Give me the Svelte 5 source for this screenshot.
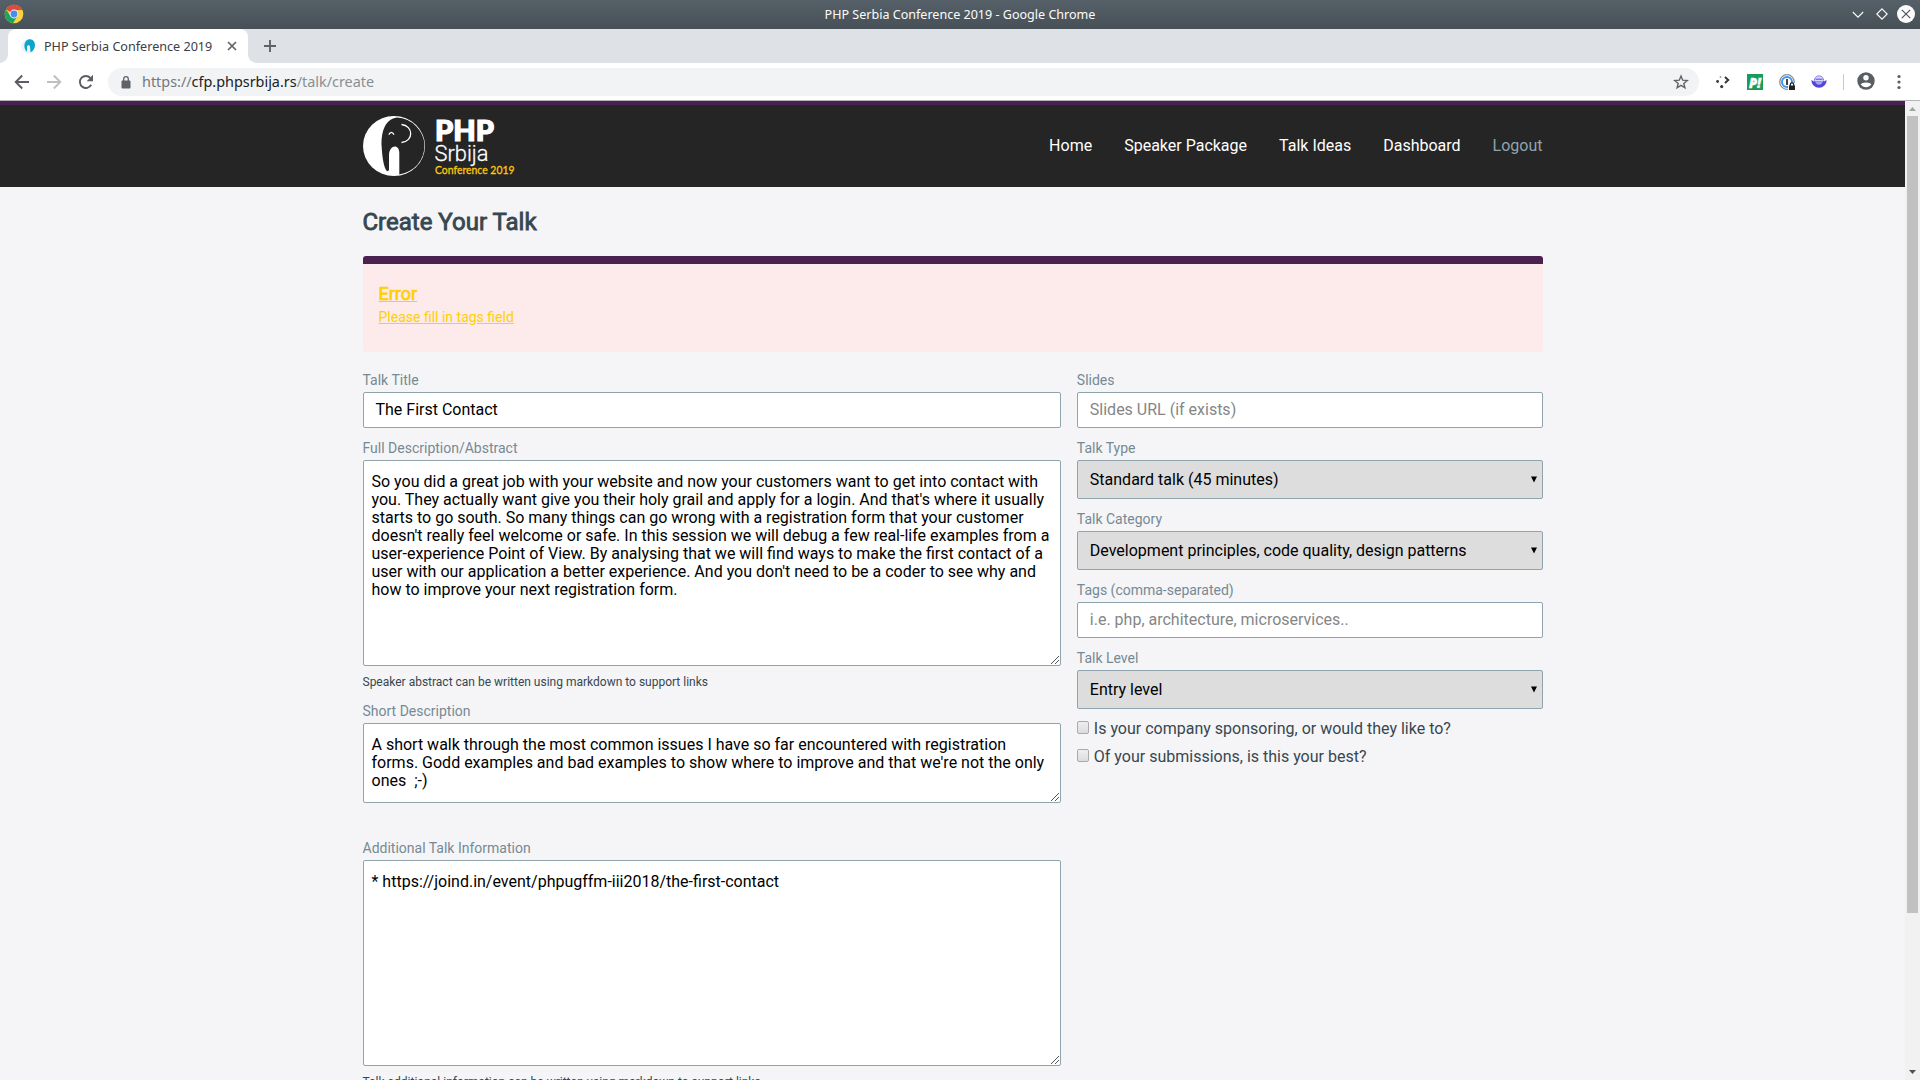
<script>
  const nav = ['Home', 'Speaker Package', 'Talk Ideas', 'Dashboard'];

  const abstractText = [
    'So you did a great job with your website and now your customers want to get into contact with',
    "you. They actually want give you their holy grail and apply for a login. And that's where it usually",
    'starts to go south. So many things can go wrong with a registration form that your customer',
    "doesn't really feel welcome or safe. In this session we will debug a few real-life examples from a",
    'user-experience Point of View. By analysing that we will find ways to make the first contact of a',
    "user with our application a better experience. And you don't need to be a coder to see why and",
    'how to improve your next registration form.'
  ].join('\n');

  const shortText = [
    'A short walk through the most common issues I have so far encountered with registration',
    "forms. Godd examples and bad examples to show where to improve and that we're not the only",
    'ones  ;-)'
  ].join('\n');

  const infoText = '* https://joind.in/event/phpugffm-iii2018/the-first-contact';
</script>

{#snippet area(text, size)}
  <div class="area {size}">
    {text}
    <svg class="grip" width="8" height="8" viewBox="0 0 8 8" shape-rendering="crispEdges">
      <path d="M0 7.5h1M1 6.5h1M2 5.5h1M3 4.5h1M4 3.5h1M5 2.5h1M6 1.5h1M7 .5h1M4 7.5h1M5 6.5h1M6 5.5h1M7 4.5h1" stroke="#555" />
    </svg>
  </div>
{/snippet}

{#snippet dropdown(text)}
  <div class="field select">
    <span>{text}</span>
    <svg width="6" height="7" viewBox="0 0 6 7"><path d="M0 .5h6L3 6.5z" fill="#000" /></svg>
  </div>
{/snippet}

<div class="window">
  <header class="titlebar">
    <svg class="chrome" width="20" height="20" viewBox="0 0 20 20">
      <circle cx="10" cy="10" r="9.3" fill="#fdd23f" />
      <path d="M10 10L1.9 5.4A9.3 9.3 0 0 1 18.4 6H10z" fill="#dd4b3e" />
      <path d="M1.9 5.4A9.3 9.3 0 0 0 9 19.2L13.4 12 10 10 6.5 12z" fill="#1ea361" />
      <circle cx="10" cy="10" r="4.4" fill="#f3f3f3" />
      <circle cx="10" cy="10" r="3.4" fill="#4a8af4" />
    </svg>
    <span class="wtitle">PHP Serbia Conference 2019 - Google Chrome</span>
    <svg class="wbuttons" width="68" height="20" viewBox="0 0 68 20" fill="none" stroke="#fcfcfc" stroke-width="1.1">
      <path d="M4.8 8l5.2 5.2L15.2 8" />
      <path d="M34 4.8L39.2 10 34 15.2 28.8 10z" />
      <circle cx="58" cy="10" r="9" fill="#fcfcfc" stroke="none" />
      <path d="M53.8 5.8l8.4 8.4M62.2 5.8l-8.4 8.4" stroke="#475057" />
    </svg>
  </header>

  <div class="tabs">
    <div class="tab">
      <svg width="16" height="16" viewBox="0 0 16 16">
        <circle cx="7" cy="8.5" r="7" fill="#eef4f6" />
        <path d="M5 3C8-.5 14 1.500 14 7c0 3-1.500 6-4.500 7.500L9 8.500C8.500 6.500 6 7 6 9v4.500C3 12 2.500 6 5 3z" fill="#0ea5cd" />
      </svg>
      <span>PHP Serbia Conference 2019</span>
      <svg class="x" width="10" height="10" viewBox="0 0 10 10"><path d="M1 1l8 8M9 1L1 9" stroke="#5f6368" stroke-width="1.7" /></svg>
    </div>
    <svg class="plus" width="12" height="12" viewBox="0 0 12 12"><path d="M6 0v12M0 6h12" stroke="#5f6368" stroke-width="1.9" /></svg>
  </div>

  <div class="toolbar">
    <svg class="nb" width="16" height="16" viewBox="0 0 16 16" fill="none" stroke="#5a5e63" stroke-width="1.9"><path d="M15 8H2M8.200 1.500L1.700 8l6.500 6.500" /></svg>
    <svg class="nb" width="16" height="16" viewBox="0 0 16 16" fill="none" stroke="#bdbfc2" stroke-width="1.900"><path d="M1 8h13M7.800 1.500L14.300 8l-6.500 6.500" /></svg>
    <svg class="nb" width="16" height="16" viewBox="0 0 16 16"><path d="M13.200 10.800A6 6 0 1 1 12.400 4" fill="none" stroke="#5a5e63" stroke-width="1.900" /><path d="M15 .8v6.400H8.700z" fill="#5a5e63" /></svg>
    <div class="omnibox">
      <svg width="10" height="13" viewBox="0 0 10 13"><rect x=".5" y="4.500" width="9" height="8" rx="1" fill="#5f6368" /><path d="M2.700 5V3a2.300 2.300 0 0 1 4.600 0v2" fill="none" stroke="#5f6368" stroke-width="1.300" /></svg>
      <span class="url"><i>https://</i>cfp.phpsrbija.rs<i class="path">/talk/create</i></span>
      <svg class="star" width="16" height="16" viewBox="0 0 16 16"><path d="M8 2l1.700 4.200 4.600.3-3.500 2.900 1.100 4.400L8 11.400l-3.900 2.400 1.100-4.400-3.500-2.900 4.600-.3z" fill="none" stroke="#5f6368" stroke-width="1.400" /></svg>
    </div>
    <div class="exts">
      <svg width="16" height="16" viewBox="0 0 16 16" fill="#33373b"><circle cx="2.600" cy="7.500" r="1.400" /><circle cx="6.700" cy="12.600" r="1.600" /><circle cx="5.500" cy="3" r=".9" fill="#999" /><path d="M10 3l3.200 3L10 9" fill="none" stroke="#33373b" stroke-width="2" /></svg>
      <svg width="16" height="16" viewBox="0 0 16 16"><rect width="16" height="16" fill="#179c5b" /><text x="2" y="13.500" font-family="Open Sans, sans-serif" font-size="14.500" font-weight="800" font-style="italic" fill="#fff" stroke="#fff" stroke-width=".4" textLength="12" lengthAdjust="spacingAndGlyphs">P!</text></svg>
      <svg width="16" height="16" viewBox="0 0 16 16"><circle cx="8" cy="8" r="7.300" fill="#fff" stroke="#8c8f92" stroke-width="1.300" /><circle cx="8" cy="8" r="5" fill="none" stroke="#3b95f2" stroke-width="2" /><rect x="7" y="5" width="2" height="6" fill="#444" /><rect x="9" y="9" width="7" height="7" fill="#fff" /><rect x="10" y="11.500" width="6" height="4.500" fill="#222" /><path d="M11.300 12v-1.400a1.700 1.700 0 0 1 3.400 0V12" fill="none" stroke="#222" stroke-width="1.200" /></svg>
      <svg width="16" height="16" viewBox="0 0 16 16"><circle cx="8" cy="6.500" r="4.700" fill="#d9d7fa" stroke="#8d86ee" /><path d="M.3 6a7.700 7.700 0 0 0 15.400 0l-2.700 1.500H3z" fill="#5046de" /><path d="M4.500 8h7A3.600 3.600 0 0 1 4.500 8z" fill="#a7a2f4" /><path d="M4.500 5.200h7" stroke="#5046de" /></svg>
    </div>
    <div class="divider"></div>
    <svg class="profile" width="18" height="18" viewBox="0 0 18 18"><circle cx="9" cy="9" r="8.700" fill="#5a5e63" /><circle cx="9" cy="5.800" r="2.700" fill="#fff" /><path d="M3.700 12.600C4.500 9.800 13.500 9.800 14.300 12.600 11.800 16 6.200 16 3.700 12.600z" fill="#fff" /></svg>
    <svg class="menu" width="4" height="16" viewBox="0 0 4 16" fill="#5a5e63"><circle cx="2" cy="2.500" r="1.600" /><circle cx="2" cy="8" r="1.600" /><circle cx="2" cy="13.500" r="1.600" /></svg>
  </div>

  <div class="viewport">
    <div class="page">
      <div class="nav">
        <div class="inner">
          <svg class="logo" width="156" height="64" viewBox="0 0 156 64">
            <ellipse cx="31" cy="31" rx="31" ry="30" fill="#fff" />
            <path d="M34 2.500C21 4 18 19 18.700 32 19.200 42 20.500 50 22.800 54.500 24 57 26 56.500 26 54V40C26 30 36.300 28 36.300 38V59.500A29.600 28.700 0 0 0 34 2.500z" fill="#252525" />
            <path d="M38.500 9.500C50.500 10.500 51 26.500 38.500 27.500" fill="none" stroke="#fff" stroke-width="1.300" />
            <path d="M25.800 19.600Q28.400 15.200 31 19.600" fill="none" stroke="#fff" stroke-width="1.300" />
            <text x="72" y="26" font-family="Lato, sans-serif" font-size="27.500" font-weight="900" fill="#fff" stroke="#fff" stroke-width="1.200" textLength="59" lengthAdjust="spacingAndGlyphs">PHP</text>
            <text x="71.500" y="45.700" font-family="Roboto, sans-serif" font-size="22.500" font-weight="300" fill="#fff" stroke="#fff" stroke-width=".3" textLength="54" lengthAdjust="spacingAndGlyphs">Srbija</text>
            <text x="72" y="59.300" font-family="Lato, sans-serif" font-size="12" font-weight="400" fill="#fecb0a" stroke="#fecb0a" stroke-width=".3" textLength="79.500" lengthAdjust="spacingAndGlyphs">Conference 2019</text>
          </svg>
          <nav>
            {#each nav as item}<a href="#top">{item}</a>{/each}
            <a class="out" href="#top">Logout</a>
          </nav>
        </div>
      </div>

      <main>
        <h1>Create Your Talk</h1>
        <div class="error">
          <h2>Error</h2>
          <p>Please fill in tags field</p>
        </div>
        <div class="cols">
          <section>
            <div class="label">Talk Title</div>
            <div class="field">The First Contact</div>
            <div class="label">Full Description/Abstract</div>
            {@render area(abstractText, 'tall')}
            <div class="note">Speaker abstract can be written using markdown to support links</div>
            <div class="label tight">Short Description</div>
            {@render area(shortText, 'short')}
            <div class="label far">Additional Talk Information</div>
            {@render area(infoText, 'tall')}
            <div class="note">Talk additional information can be written using markdown to support links</div>
          </section>
          <section>
            <div class="label">Slides</div>
            <div class="field hint">Slides URL (if exists)</div>
            <div class="label">Talk Type</div>
            {@render dropdown('Standard talk (45 minutes)')}
            <div class="label">Talk Category</div>
            {@render dropdown('Development principles, code quality, design patterns')}
            <div class="label">Tags (comma-separated)</div>
            <div class="field hint">i.e. php, architecture, microservices..</div>
            <div class="label">Talk Level</div>
            {@render dropdown('Entry level')}
            <div class="checks">
              <div class="check"><span class="box"></span>Is your company sponsoring, or would they like to?</div>
              <div class="check"><span class="box"></span>Of your submissions, is this your best?</div>
            </div>
          </section>
        </div>
      </main>
    </div>
    <div class="scrollbar">
      <svg width="7" height="4" viewBox="0 0 7 4"><path d="M0 4L3.500 0 7 4z" fill="#a3a3a3" /></svg>
      <div class="thumb"></div>
      <svg class="down" width="7" height="4" viewBox="0 0 7 4"><path d="M0 0h7L3.500 4z" fill="#505050" /></svg>
    </div>
  </div>
</div>

<style>
  :global(body) { margin: 0; overflow: hidden; }
  .window, .window * { box-sizing: border-box; }
  .window { width: 1920px; height: 1080px; display: flex; flex-direction: column; overflow: hidden; font-family: Roboto, sans-serif; font-size: 16px; }
  svg { display: block; flex: none; }

  .titlebar { flex: none; height: 29px; display: grid; grid-template-columns: 1fr auto 1fr; align-items: center; background: linear-gradient(#566068, #475057); color: #fcfcfc; font-family: "Noto Sans", sans-serif; font-size: 12.550px; }
  .titlebar svg { margin-top: -1px; }
  .chrome { margin-left: 4px; }
  .wtitle { line-height: 29px; white-space: nowrap; }
  .wbuttons { justify-self: end; margin-right: 4px; }

  .tabs { flex: none; height: 34px; background: #dee1e6; display: flex; align-items: center; font-family: "Noto Sans", sans-serif; }
  .tab { position: relative; width: 240px; height: 34px; margin-left: 8px; padding: 0 11px 0 13px; display: flex; align-items: center; background: #fff; border-radius: 8px 8px 0 0; font-size: 12.600px; color: #3c4043; white-space: nowrap; }
  .tab::before, .tab::after { content: ""; position: absolute; bottom: 0; width: 8px; height: 8px; }
  .tab::before { left: -8px; background: radial-gradient(circle at 0 0, transparent 7.500px, #fff 8px); }
  .tab::after { right: -8px; background: radial-gradient(circle at 100% 0, transparent 7.500px, #fff 8px); }
  .tab span { margin-left: 7px; }
  .tab .x { margin-left: auto; }
  .plus { margin-left: 16px; }

  .toolbar { flex: none; height: 38px; display: flex; align-items: center; padding-left: 14px; background: #fff; border-bottom: 1px solid #b4b6b9; }
  .nb { margin-right: 16px; }
  .nb:nth-child(3) { margin-right: 14px; }
  .omnibox { flex: none; width: 1591px; height: 28px; margin-top: 1px; padding: 0 10px 0 13px; display: flex; align-items: center; background: #f1f3f4; border-radius: 14px; font-family: "Noto Sans", sans-serif; font-size: 14.400px; color: #202124; }
  .url { margin: -1px 0 0 11px; white-space: nowrap; }
  .url i { font-style: normal; color: #74787c; }
  .url .path { color: #8a8e92; }
  .star { margin-left: auto; }
  .exts { display: flex; gap: 16px; margin-left: 16px; margin-top: 1px; }
  .divider { width: 1px; height: 16px; margin: 1px 0 0 16px; background: #c6c8ca; }
  .profile { margin: -1px 0 0 13px; }
  .menu { margin-left: 22px; }

  .viewport { flex: 1; min-height: 0; display: flex; }
  .page { width: 1905px; overflow: hidden; background: #f5f5f8; }
  .nav { height: 86px; background: #252525; border-top: 4px solid #4b2152; }
  .inner { width: 1180px; margin: 0 auto; display: flex; justify-content: space-between; }
  .logo { margin-top: 10px; }
  nav { display: flex; gap: 32px; line-height: 82px; }
  nav a { color: #fff; text-decoration: none; }
  nav .out { color: #90a4ae; }

  main { width: 1180px; margin: 0 auto; }
  h1 { margin: 0; padding-top: 21px; height: 69px; font-size: 24px; line-height: 28px; font-weight: 400; color: #37474f; -webkit-text-stroke: .85px #37474f; }
  .error { height: 96px; padding: 19px 16px 0; border-top: 8px solid #4b2152; border-radius: 3px; background: #fdeaea; color: #ffd003; }
  h2 { margin: 0; font-size: 18px; line-height: 22px; font-weight: 400; -webkit-text-stroke: .7px #ffd003; text-decoration: underline; }
  .error p { margin: 1px 0 0; font-size: 14px; line-height: 22px; text-decoration: underline; }

  .cols { display: grid; grid-template-columns: 698px 466px; gap: 16.330px; padding-top: 8px; }
  .label { height: 32px; padding-top: 12px; font-size: 14px; line-height: 16px; color: #758a93; }
  .note { height: 27px; padding-top: 8px; font-size: 12px; line-height: 16px; color: #37474f; }
  .label.tight { height: 30px; padding-top: 10px; }
  .label.far { height: 57px; padding-top: 37px; }
  .field { height: 36px; padding: 0 12px; border: 1px solid #90a4ae; border-radius: 2px; background: #fff; color: #000; line-height: 34px; white-space: nowrap; }
  .hint { color: #868686; }
  .select { height: 39px; line-height: 37px; background: #ddd; display: flex; justify-content: space-between; align-items: center; padding-right: 5px; }
  .area { position: relative; padding: 12px 8px; border: 1px solid #90a4ae; border-radius: 2px; background: #fff; color: #000; line-height: 18px; white-space: pre; display: flex; }
  .area.tall { height: 206px; }
  .area.short { height: 80px; }
  .grip { position: absolute; right: 1px; bottom: 1px; }
  .checks { padding-top: 10px; display: flex; flex-direction: column; }
  .check { display: flex; height: 28px; line-height: 20px; color: #37474f; }
  .box { width: 12px; height: 13px; margin: 2px 5px 0 0; border: 1px solid #aaa; border-radius: 2px; background: linear-gradient(#eee, #dcdcdc); }

  .scrollbar { width: 15px; background: #f1f1f1; display: flex; flex-direction: column; align-items: center; padding: 6px 0; }
  .thumb { width: 11px; height: 797px; margin-top: 5px; background: #c1c1c1; }
  .down { margin-top: auto; }
</style>
